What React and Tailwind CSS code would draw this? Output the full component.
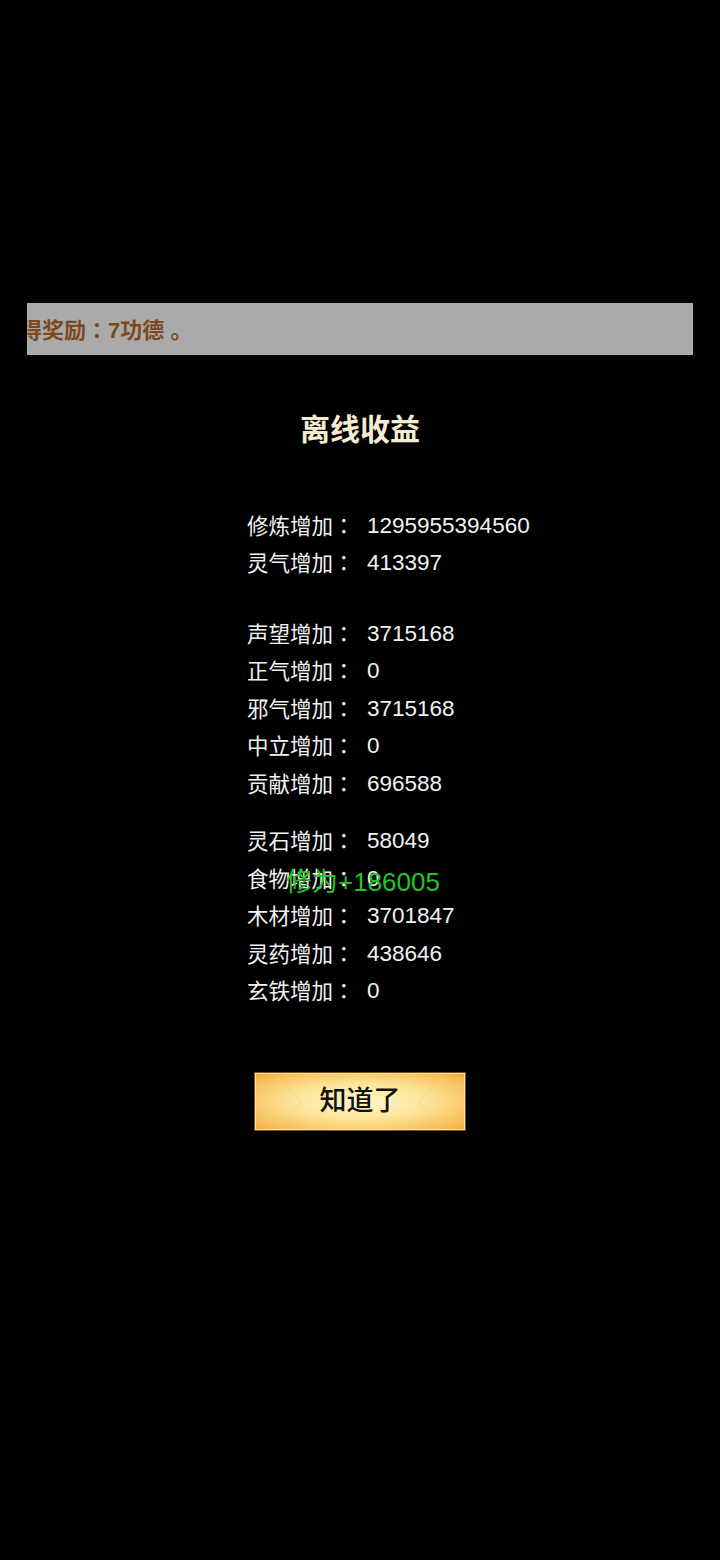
const font = { fontFamily: '"Liberation Sans", "Noto Sans CJK SC", sans-serif' };

const groups = [
  [
    ['修炼增加', '1295955394560'],
    ['灵气增加', '413397'],
  ],
  [
    ['声望增加', '3715168'],
    ['正气增加', '0'],
    ['邪气增加', '3715168'],
    ['中立增加', '0'],
    ['贡献增加', '696588'],
  ],
  [
    ['灵石增加', '58049'],
    ['食物增加', '0'],
    ['木材增加', '3701847'],
    ['灵药增加', '438646'],
    ['玄铁增加', '0'],
  ],
];

function Row({ label, value }) {
  return (
    <div className="flex h-[37.5px] items-center text-[#f2f2f2]">
      <span className="w-[120px] text-[21.5px]">
        {label}
        <span className="font-['Noto_Sans_CJK_TC',sans-serif]">：</span>
      </span>
      <span className="text-[22.5px]">{value}</span>
    </div>
  );
}

export default function App() {
  return (
    <div className="relative min-h-[1560px] w-[720px] bg-black pt-[303px]" style={font}>
      {/* scrolling notice */}
      <div className="mx-[27px] flex h-[52px] items-center overflow-hidden bg-[#aaaaaa]">
        <span className="ml-[-7px] whitespace-nowrap text-[22px] font-bold text-[#7a4a1e]">
          得奖励<span className="font-['Noto_Sans_CJK_TC',sans-serif]">：</span>7功德 。
        </span>
      </div>

      <h1 className="mt-[55px] text-center text-[30px] font-bold leading-[40px] text-[#f3eed2]">
        离线收益
      </h1>

      <div className="mt-[57px] pl-[247px]">
        <div>
          {groups[0].map(([l, v]) => (
            <Row key={l} label={l} value={v} />
          ))}
        </div>
        <div className="mt-[33px]">
          {groups[1].map(([l, v]) => (
            <Row key={l} label={l} value={v} />
          ))}
        </div>
        <div className="mt-[20px]">
          {groups[2].map(([l, v]) => (
            <Row key={l} label={l} value={v} />
          ))}
        </div>
      </div>

      <div className="mt-[62px] flex justify-center">
        <button className="relative flex h-[59px] w-[212px] items-center justify-center overflow-hidden border border-[#7a4f1c] bg-[radial-gradient(ellipse_at_center,#fff6c8_0%,#fde49a_45%,#f6bd55_85%,#f0a93a_100%)] shadow-[inset_0_0_0_1px_#ffe7a0]">
          <span className="absolute left-[6px] top-1/2 h-[34px] w-[34px] -translate-y-1/2 rotate-45 border border-[#f8d28a]/60" />
          <span className="absolute right-[6px] top-1/2 h-[34px] w-[34px] -translate-y-1/2 rotate-45 border border-[#f8d28a]/60" />
          <span className="relative text-[27px] font-medium text-[#111]">知道了</span>
        </button>
      </div>

      {/* floating gain text */}
      <div className="absolute left-[286px] top-[865px] whitespace-nowrap text-[26px] leading-[34px] text-[#22c522]">
        修为+186005
      </div>
    </div>
  );
}
